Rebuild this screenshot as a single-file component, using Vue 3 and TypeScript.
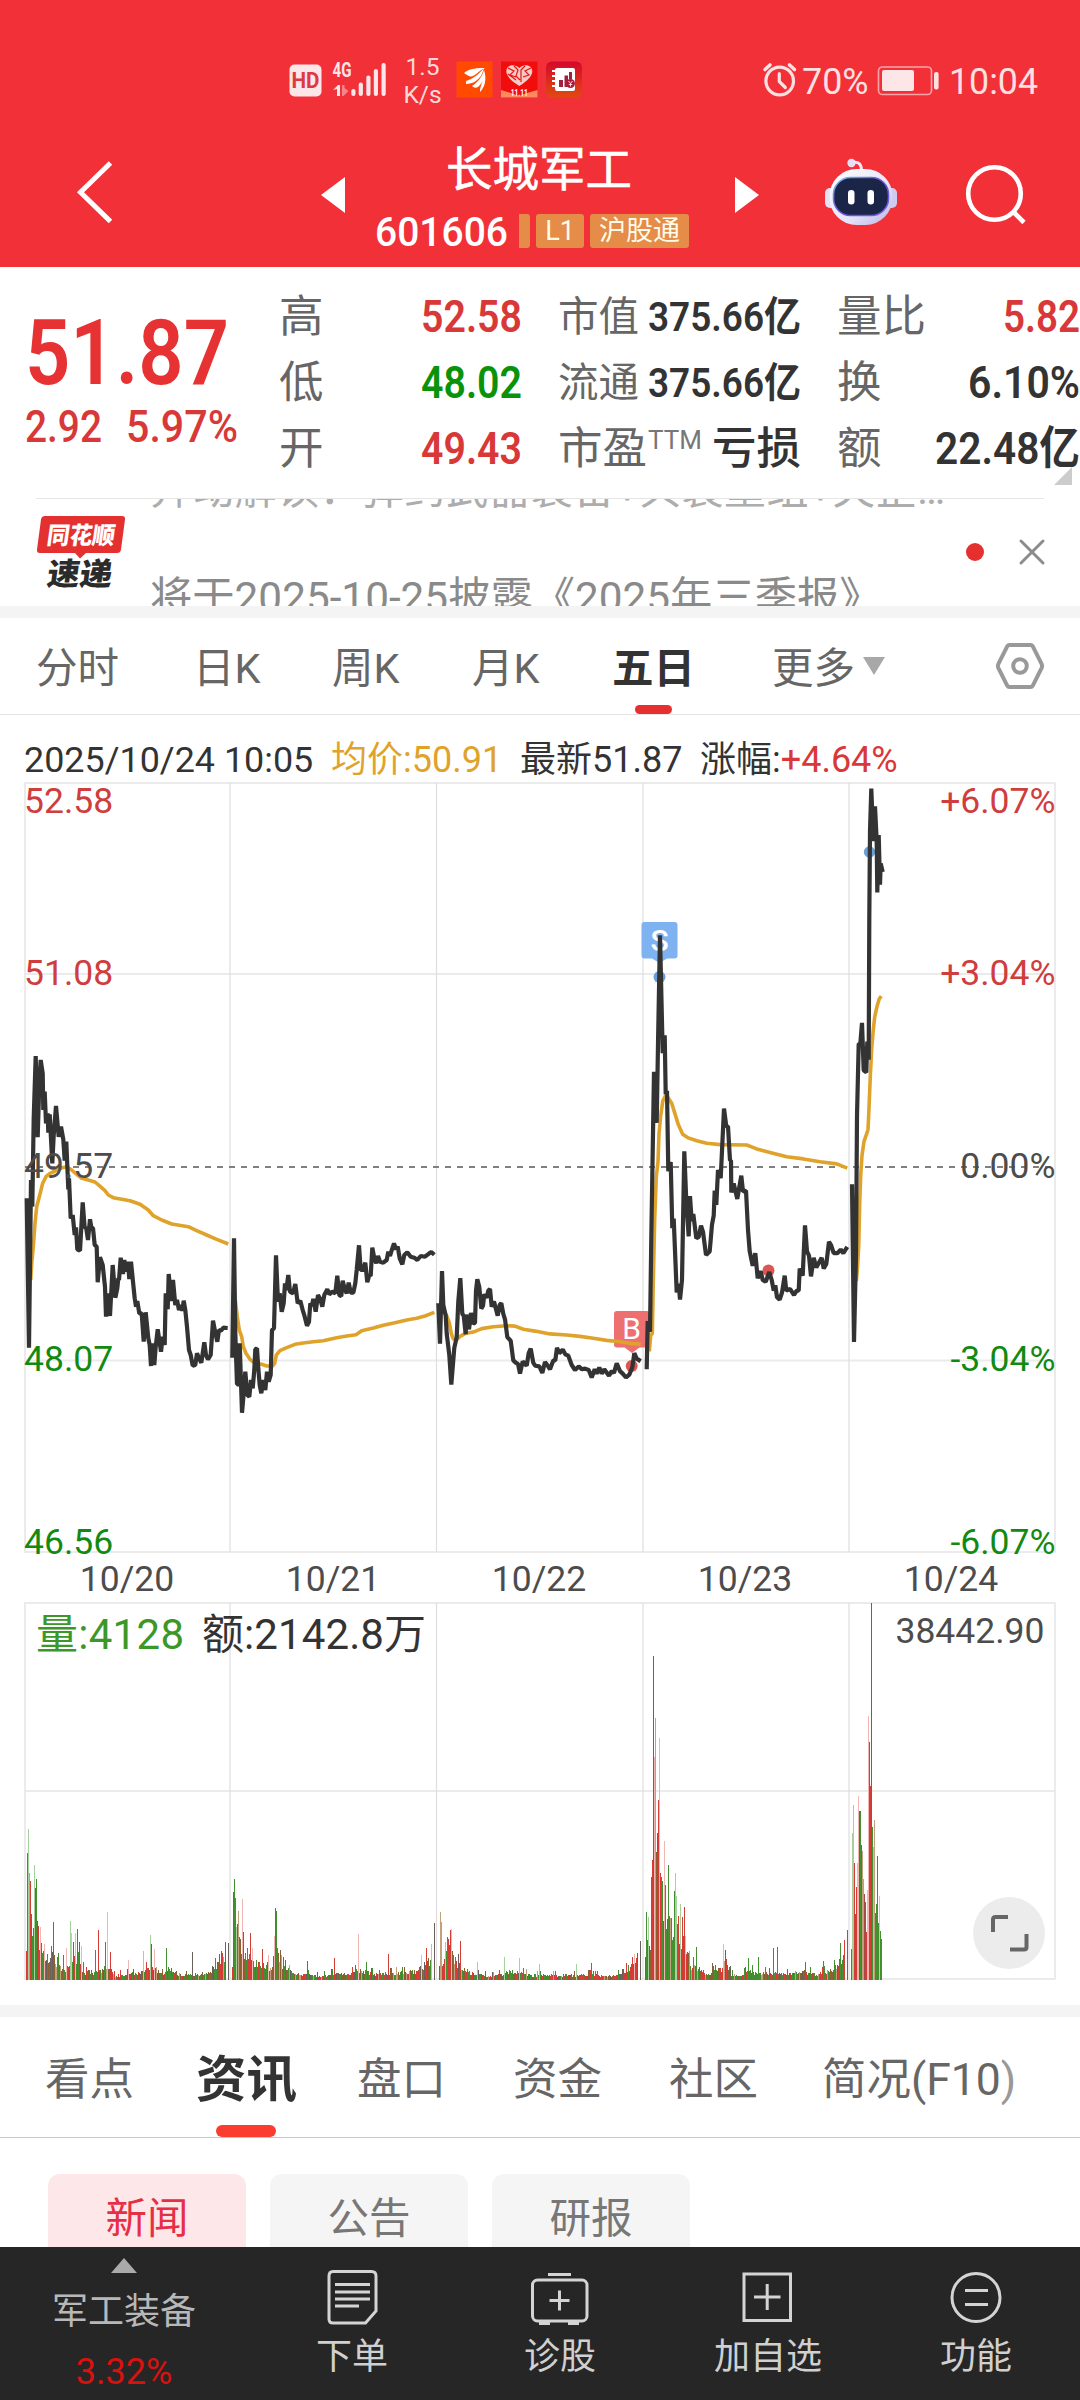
<script setup lang="ts">
import { h } from 'vue'

interface FitProps { t: string; w: number; s: number; wt?: number; box?: number }

// Condensed numerals: squeezes the text to a fixed advance width.
const Fit = (p: FitProps) => {
  const box = p.box ?? 66
  return h('svg', { width: p.w, height: box, style: 'display:block;flex:none;overflow:visible' }, [
    h('text', {
      x: 0,
      y: box / 2 + p.s * 0.355,
      'font-size': p.s,
      'font-weight': p.wt ?? 500,
      textLength: p.w,
      lengthAdjust: 'spacingAndGlyphs',
      fill: 'currentColor',
    }, p.t),
  ])
}

interface Session { ox: number; oy: number; sy: number; price: string; avg: string }

const sessions: Session[] = [
  {
    ox: 0, oy: 980, sy: 3,
    price: '80,655 87,1103 93,600 97,680 101,415 107,228 113,472 118,310 122,240 128,280 130,390 134,335 138,430 143,400 145,458 149,403 157,550 161,466 168,378 176,470 183,440 190,478 194,542 199,485 205,628 207,595 212,715 218,705 224,765 228,742 232,808 240,812 248,667 254,745 258,740 264,780 270,718 274,742 279,745 284,795 290,800 293,907 300,832 308,855 315,920 318,1010 323,940 330,1008 338,855 346,953 352,925 355,895 357,900 362,833 369,882 373,840 378,875 384,845 388,897 393,845 399,905 404,955 408,980 412,963 418,1000 425,1000 431,1085 437,997 445,1075 449,1095 453,1158 457,1090 463,1155 467,1100 473,1048 483,1115 488,1070 494,1095 497,940 503,988 506,882 514,963 519,900 526,975 531,960 537,990 543,975 547,992 551,962 556,990 561,1040 567,1110 572,1125 578,1157 586,1155 591,1120 597,1135 604,1148 613,1087 618,1125 624,1138 632,1125 639,1022 646,1058 652,1085 657,1050 663,1052 670,1043 683,1044',
    avg: '92,900 95,850 100,800 105,730 110,680 118,650 128,610 138,590 150,580 165,573 180,565 200,560 215,570 230,583 245,595 265,600 285,606 298,617 315,632 325,645 340,653 365,658 390,662 420,673 445,690 460,707 485,720 515,732 565,740 590,752 620,765 650,778 685,792',
  },
  {
    ox: 0, oy: 980, sy: 3,
    price: '697,1133 702,775 706,1060 711,1213 716,1213 719,1090 726,1298 731,1240 736,1175 742,1245 748,1250 753,1200 758,1225 763,1170 766,1108 771,1105 775,1165 779,1215 784,1240 790,1200 796,1230 801,1175 806,1205 812,1185 816,1050 822,1045 828,826 833,945 837,965 839,940 845,995 851,970 855,910 859,930 865,885 870,935 879,940 886,912 893,970 901,962 908,990 914,1010 921,1037 927,1025 931,970 936,978 940,957 947,995 954,945 961,958 967,980 973,945 982,928 988,943 997,935 1006,940 1012,887 1018,945 1024,948 1028,902 1034,928 1040,940 1046,908 1052,938 1060,938 1066,910 1070,870 1077,796 1082,870 1089,870 1096,848 1102,907 1108,885 1112,888 1117,803 1123,835 1129,850 1134,828 1140,845 1150,848 1160,840 1165,815 1170,828 1176,808 1182,790 1188,808 1193,800 1199,835 1207,853 1213,825 1222,817 1232,830 1243,833 1252,840 1262,828 1275,830 1288,820 1294,816 1303,824',
    avg: '706,960 712,1010 718,1050 725,1070 730,1100 738,1120 750,1138 765,1150 785,1153 800,1158 818,1158 824,1150 829,1125 840,1112 860,1103 885,1093 910,1089 940,1085 970,1082 1010,1073 1040,1068 1068,1064 1085,1052 1120,1044 1150,1036 1185,1028 1220,1020 1250,1015 1275,1008 1303,997',
  },
  {
    ox: 420, oy: 880, sy: 2.8,
    price: '55,1185 60,1298 66,1095 70,1190 77,1220 80,1270 88,1330 94,1413 103,1310 110,1280 115,1180 121,1115 127,1215 131,1220 137,1272 139,1217 147,1258 153,1212 160,1242 165,1240 168,1150 172,1118 178,1140 184,1200 189,1192 193,1160 200,1170 205,1150 210,1145 215,1195 222,1180 229,1205 233,1220 239,1190 244,1185 250,1215 255,1230 262,1280 272,1290 280,1345 288,1352 294,1355 300,1382 308,1348 320,1360 326,1325 332,1312 340,1352 346,1360 358,1362 367,1380 375,1350 382,1358 390,1370 400,1345 406,1345 411,1310 418,1325 428,1315 436,1328 445,1332 455,1358 465,1372 476,1362 486,1370 495,1368 506,1372 515,1393 524,1370 530,1382 538,1365 545,1382 553,1370 567,1388 575,1375 582,1380 590,1353 600,1375 608,1382 618,1393 628,1385 637,1365 643,1325 650,1340 662,1347',
    avg: '72,1205 80,1220 88,1240 94,1270 100,1285 110,1287 120,1278 135,1270 160,1266 185,1256 220,1251 260,1248 285,1249 310,1258 345,1263 390,1271 440,1274 480,1278 520,1283 560,1289 600,1293 640,1298 662,1300',
  },
  {
    ox: 420, oy: 880, sy: 2.8,
    price: '680,1370 683,1235 690,1265 694,1000 702,537 710,680 714,460 720,155 728,485 734,435 737,600 741,590 745,815 752,790 757,975 761,948 770,1155 776,1130 780,1175 786,1120 793,760 799,900 806,998 810,885 815,955 820,935 829,1003 836,1000 843,968 849,985 858,1050 869,1040 876,965 881,940 884,870 889,910 894,812 902,835 907,740 912,640 919,690 924,690 930,785 933,785 934,875 941,850 952,893 957,865 964,828 969,872 978,870 984,980 989,1040 998,1080 1006,1045 1013,1115 1022,1095 1028,1120 1037,1125 1048,1098 1055,1120 1061,1150 1066,1135 1071,1168 1079,1175 1086,1155 1094,1108 1099,1150 1110,1145 1122,1162 1130,1150 1136,1150 1139,1088 1148,1108 1155,967 1161,1040 1167,1052 1173,1110 1181,1058 1189,1085 1198,1070 1205,1058 1211,1088 1219,1075 1227,1013 1233,1022 1241,1045 1252,1045 1262,1035 1270,1045 1282,1027',
    avg: '688,1320 692,1275 697,1270 700,1120 704,950 709,830 714,790 717,710 722,660 728,620 736,605 745,610 755,625 765,655 775,685 788,712 805,722 830,730 860,737 900,741 980,742 1010,753 1050,763 1100,775 1150,781 1200,789 1250,795 1282,807',
  },
  {
    ox: 780, oy: 760, sy: 2.529,
    price: '216,1073 222,1472 228,1250 231,900 236,718 241,718 246,665 251,785 259,790 262,712 266,758 268,400 270,180 274,72 280,205 285,117 290,205 292,335 296,190 300,315 302,262 308,283',
    avg: '229,1318 232,1290 236,1230 239,1120 242,1050 246,1000 252,965 264,935 267,880 271,800 275,730 279,690 284,650 292,620 298,604 304,597',
  },
]

const place = (s: Session, raw: string): string =>
  raw.split(' ').map((p) => {
    const [x, y] = p.split(',').map(Number)
    return `${(s.ox + x / 3).toFixed(1)},${(s.oy + y / s.sy).toFixed(1)}`
  }).join(' ')

const lines = sessions.map((s) => ({ price: place(s, s.price), avg: place(s, s.avg) }))

const tints: Record<string, string> = {
  r: '#d63c36', g: '#429030', b: '#8a6030', t: '#c3a07c', p: '#f2b6b2', l: '#a5d19d', d: '#a84a44', k: '#6b5f5a',
}
const BASE = 1980
const XS = 2.904

interface Volume { env: [number, number][]; peaks: string }
const volumes: Volume[] = [
  {
    env: [[76, 45], [90, 48], [110, 50], [125, 25], [160, 16], [190, 12], [210, 24], [235, 16], [245, 8], [290, 9], [310, 17], [330, 5], [400, 7], [440, 14], [470, 6], [485, 13], [520, 6], [540, 5], [600, 8], [640, 18], [655, 32]],
    peaks: '80,938,g 82,867,l 85,998,t 88,1024,r 91,1122,b 97,1165,r 100,975,l 103,1045,r 106,1016,g 112,1158,r 117,1162,p 128,1212,p 150,1218,g 155,1147,r 170,1240,g 185,1245,g 192,1225,p 205,1142,l 208,1180,p 213,1205,b 219,1180,p 225,1167,r 230,1207,b 236,1217,p 277,1230,g 286,1170,r 306,1205,g 312,1117,p 320,1237,r 373,1260,p 418,1232,l 437,1185,l 440,1213,k 450,1228,p 483,1225,g 560,1237,k 655,1207,b 663,1210,k',
  },
  {
    env: [[676, 18], [681, 70], [695, 40], [715, 30], [740, 20], [790, 13], [800, 40], [815, 17], [840, 9], [880, 6], [930, 4], [970, 7], [1000, 6], [1040, 10], [1100, 6], [1130, 7], [1200, 9], [1235, 18], [1252, 25]],
    peaks: '678,1055,r 681,1018,g 684,1075,g 688,1162,l 692,1113,t 705,1077,p 708,1175,b 727,1180,r 734,1225,p 762,1228,r 780,1245,p 796,1187,p 800,1103,r 803,1112,g 806,1225,g 892,1262,r 971,1255,r 1041,1182,p 1065,1267,g 1129,1242,r 1223,1245,p 1238,1225,r 1254,1213,l 1261,1150,k',
  },
  {
    env: [[1277, 20], [1290, 22], [1300, 38], [1310, 32], [1320, 20], [1340, 14], [1360, 8], [1400, 5], [1430, 4], [1470, 8], [1500, 9], [1540, 5], [1660, 5], [1700, 6], [1760, 4], [1818, 7], [1851, 22]],
    peaks: '1280,1117,t 1282,1145,t 1295,1207,l 1300,1190,g 1308,1170,r 1312,1168,p 1337,1203,r 1388,1267,l 1465,1252,l 1508,1255,l 1568,1272,l 1674,1272,l 1718,1268,g 1819,1268,r 1843,1242,p 1851,1240,k 1859,1203,k',
  },
  {
    env: [[1874, 15], [1880, 50], [1890, 40], [1894, 110], [1902, 180], [1908, 90], [1915, 180], [1920, 98], [1930, 60], [1943, 60], [1953, 46], [1968, 52], [1986, 38], [1998, 20], [2018, 13], [2038, 10], [2058, 5], [2073, 14], [2088, 10], [2106, 22], [2123, 6], [2148, 4], [2168, 14], [2188, 8], [2218, 8], [2268, 6], [2338, 9], [2368, 6], [2418, 11], [2438, 20], [2452, 30]],
    peaks: '1877,1115,g 1884,1130,l 1891,1010,r 1894,960,r 1897,348,d 1900,650,p 1903,533,t 1908,880,d 1913,780,r 1916,595,p 1920,1012,g 1923,1022,g 1929,902,p 1934,1035,g 1941,975,g 1948,1135,t 1958,1052,g 1961,998,l 1964,1068,l 1970,1127,r 1975,1092,l 1981,1130,r 1987,1102,r 1990,1187,p 2000,1240,b 2022,1222,g 2100,1213,p 2106,1230,k 2173,1255,g 2202,1250,g 2246,1225,g 2257,1222,g 2340,1265,r 2391,1262,g 2440,1208,g 2452,1200,r 2460,1170,r',
  },
  {
    env: [[2474, 45], [2478, 120], [2486, 80], [2493, 120], [2502, 125], [2508, 80], [2518, 45], [2521, 140], [2530, 170], [2536, 120], [2544, 70], [2553, 60], [2559, 40]],
    peaks: '2475,880,l 2478,795,l 2481,970,r 2484,1122,r 2487,1040,r 2490,970,p 2493,768,p 2496,812,k 2499,812,g 2502,915,b 2504,932,t 2507,1017,t 2511,1062,d 2516,1175,r 2519,1050,p 2522,528,p 2524,605,r 2527,738,r 2530,188,d 2533,862,g 2536,920,l 2539,840,t 2542,1120,g 2545,1092,g 2548,948,g 2551,1150,g 2554,1068,p 2557,1172,g 2560,1198,g',
  },
]

let seed = 20251
const rand = (): number => {
  seed = (seed * 1103515245 + 12345) % 2147483648
  return seed / 2147483648
}

const volumePaths = (() => {
  const d: Record<string, string> = {}
  const add = (x: number, hgt: number, c: string) => {
    d[c] = (d[c] ?? '') + `M${x} ${BASE}v${-hgt.toFixed(1)}h1V${BASE}z`
  }
  for (const v of volumes) {
    const taken = new Map<number, [number, string]>()
    for (const p of v.peaks.split(' ')) {
      const [x, y, c] = p.split(',')
      taken.set(Math.floor(Number(x) / XS), [(1320 - Number(y)) / 3, c])
    }
    const first = Math.floor(v.env[0][0] / XS)
    const last = Math.floor(v.env[v.env.length - 1][0] / XS)
    for (let x = first; x <= last; x++) {
      if (taken.has(x)) continue
      const k = v.env.findIndex((e) => e[0] / XS > x)
      const b = v.env[k < 1 ? 1 : k]
      const a = v.env[k < 1 ? 0 : k - 1]
      const f = Math.min(1, Math.max(0, (x * XS - a[0]) / (b[0] - a[0])))
      const e = a[1] + (b[1] - a[1]) * f
      const r = rand()
      let hgt = e * (0.6 + 0.6 * rand())
      if (e < 20 && r > 0.86) hgt = e * 1.4 + 2
      add(x, Math.max(3, hgt), 'rgbrgbrtgkbg'[Math.floor(rand() * 12)] ?? 'r')
    }
    taken.forEach(([hgt, c], x) => add(x, hgt, c))
  }
  return Object.entries(d).map(([c, path]) => ({ fill: tints[c], path }))
})()

const gridX = [230, 436.5, 643, 849]
const prices = [
  { y: 813, l: '52.58', r: '+6.07%', c: '#cf3d3d' },
  { y: 985, l: '51.08', r: '+3.04%', c: '#cf3d3d' },
  { y: 1178, l: '49.57', r: '0.00%', c: '#4c4c4c' },
  { y: 1371, l: '48.07', r: '-3.04%', c: '#128a12' },
  { y: 1554, l: '46.56', r: '-6.07%', c: '#128a12' },
]
const dates = ['10/20', '10/21', '10/22', '10/23', '10/24']
const chips = ['新闻', '公告', '研报']
</script>

<template>
  <div class="screen">
    <header class="head">
      <div class="status">
        <svg class="st-left" width="160" height="60" viewBox="285 50 160 60">
          <rect x="289.5" y="64.5" width="32" height="32" rx="5" fill="#fde6e7" />
          <text x="305.5" y="88" text-anchor="middle" font-size="22" font-weight="700" textLength="28" lengthAdjust="spacingAndGlyphs" fill="#dd3a40">HD</text>
          <text x="332.5" y="77" font-size="20" font-weight="700" textLength="19" lengthAdjust="spacingAndGlyphs" fill="#fde6e7">4G</text>
          <path d="M333 90l5-5h2v11h-3v-7z" fill="#fde6e7" />
          <path d="M342 85h2.500v3l4 3-5 5h-1.500z" fill="#f4868a" />
          <g fill="#fde6e7">
            <rect x="351.300" y="89" width="4.200" height="7" rx="2" />
            <rect x="358.700" y="82.500" width="4.200" height="13.500" rx="2" />
            <rect x="366.300" y="75.500" width="4.200" height="20.500" rx="2" />
            <rect x="373.800" y="69" width="4.200" height="27" rx="2" />
            <rect x="381.500" y="63" width="4.200" height="33" rx="2" />
          </g>
          <text x="422.500" y="75" font-size="24.500" text-anchor="middle" fill="#fdd9da">1.5</text>
          <text x="422.500" y="103" font-size="24.500" text-anchor="middle" fill="#fdd9da">K/s</text>
        </svg>
        <svg class="apps" width="128" height="37" viewBox="456 61 128 37">
          <rect x="456.500" y="61.500" width="36" height="36" fill="#ff4a00" />
          <path d="M464 73c6-5 14-5 21-5-5 2-8 6-12 8-3 1.500-6-1-9-3z" fill="#fff" />
          <path d="M466 81c7-2 13-7 18-13l-2 6c-3 6-9 10-16 10z" fill="#fff" />
          <path d="M472 86c6-4 10-9 12-16 1 6 0 12-6 17-2 1-4 1-6-1zM480 91c0-6 5-11 4-21 3 9 1 17-4 22z" fill="#fff" />
          <rect x="501" y="61.500" width="36.500" height="36" fill="#f20d0d" />
          <path d="M501 90l10 3 8 3 8-3 10.500-3v7.500H501z" fill="#ff8a5c" />
          <path d="M519.300 86c-8-5-13-10-13-15 0-6 8-8 13-3 5-5 13-3 13 3 0 5-5 10-13 15z" fill="#f7c9c4" />
          <path d="M508 68l6 3-4 4 6 2M514 66l4 4-2 6 4 4M531 68l-6 3 4 4-6 2M525 66l-4 4v12M508 74l8 6" fill="none" stroke="#e01818" stroke-width="1.200" />
          <text x="519.300" y="95.500" text-anchor="middle" font-size="8.500" font-weight="700" textLength="17" lengthAdjust="spacingAndGlyphs" fill="#fff">11.11</text>
          <defs><linearGradient id="bk" x1="0" y1="0" x2="0" y2="1"><stop offset="0" stop-color="#d4082c" /><stop offset="1" stop-color="#e04a10" /></linearGradient></defs>
          <rect x="546" y="61.500" width="36" height="36" rx="6" fill="url(#bk)" />
          <rect x="555" y="68" width="20" height="23" rx="2" fill="#fff" />
          <path d="M552 71h6M552 76h6M552 81h6M552 86h6" stroke="#fff" stroke-width="1.800" />
          <path d="M559 80h4v7h-4zM564.500 75.500h3.500V87h-3.500zM569 72h3v7h-3z" fill="#a02040" />
          <circle cx="570.500" cy="83.500" r="4.500" fill="#b01838" />
          <path d="M568.500 81l2 2.500 2-2.500M570.500 83.500v3M568.800 84.500h3.400" stroke="#fff" stroke-width=".8" fill="none" />
        </svg>
        <svg class="st-right" width="285" height="40" viewBox="760 60 285 40" fill="none" stroke="#fde0e1">
          <circle cx="779.700" cy="81" r="13.800" stroke-width="3.200" />
          <path d="M779.300 73.500v8l6 6" stroke-width="3.200" stroke-linecap="round" />
          <path d="M765 69.500l5-4.500M794.500 69.500l-5-4.500" stroke-width="3.600" stroke-linecap="round" />
          <text x="802" y="94" font-size="36" textLength="66.500" lengthAdjust="spacingAndGlyphs" fill="#fde0e1" stroke="none">70%</text>
          <rect x="878.500" y="67" width="53" height="27.500" rx="4" stroke-width="1.600" stroke="#f9a5a8" />
          <rect x="882" y="70" width="32" height="21" rx="2" fill="#fde6e7" stroke="none" />
          <rect x="934" y="72" width="4.600" height="17.500" rx="2" fill="#fde0e1" stroke="none" />
          <text x="949" y="94" font-size="36" textLength="89" lengthAdjust="spacingAndGlyphs" fill="#fde0e1" stroke="none">10:04</text>
        </svg>
      </div>
      <div class="title-row">
        <svg class="back" width="40" height="66" viewBox="75 159 40 66"><path d="M110.500 163L80.500 192.300l30 29.200" fill="none" stroke="#fff" stroke-width="5" /></svg>
        <svg class="prev" width="24" height="36" viewBox="0 0 24 36"><path d="M24 0v36L0 18z" fill="#fff" /></svg>
        <div class="name-box">
          <div class="name">长城军工</div>
          <div class="code-row">
            <Fit t="601606" :w="133" :s="41.500" :wt="500" :box="34" />
            <span class="tag stub" />
            <span class="tag l1">L1</span>
            <span class="tag hgt">沪股通</span>
          </div>
        </div>
        <svg class="next" width="24" height="36" viewBox="0 0 24 36"><path d="M0 0v36l24-18z" fill="#fff" /></svg>
        <svg class="robot" width="74" height="68" viewBox="824 158 74 68">
          <defs>
            <linearGradient id="rb" x1="0" y1="0" x2="1" y2="1"><stop offset="0" stop-color="#fff" /><stop offset=".6" stop-color="#e6e4f8" /><stop offset="1" stop-color="#b9b4e6" /></linearGradient>
            <linearGradient id="rs" x1="0" y1="0" x2="1" y2="1"><stop offset="0" stop-color="#7ac3ee" /><stop offset=".5" stop-color="#6a4ad0" /><stop offset="1" stop-color="#6d63f0" /></linearGradient>
          </defs>
          <circle cx="851.500" cy="163" r="4.200" fill="#e6def4" />
          <path d="M853 162.500c6-1 8.500 2 8.500 8" fill="none" stroke="#f0e2ee" stroke-width="3" />
          <rect x="825" y="188" width="12" height="20" rx="5" fill="#e4e2f6" />
          <rect x="885" y="188" width="12" height="20" rx="5" fill="#cfcbee" />
          <rect x="829.500" y="169" width="63" height="56" rx="27" fill="url(#rb)" />
          <rect x="833.500" y="177.500" width="55" height="38" rx="17" fill="#1a2548" stroke="url(#rs)" stroke-width="1.600" />
          <rect x="848" y="190" width="6.500" height="14.500" rx="3.200" fill="#fff" />
          <rect x="867.500" y="190" width="6.500" height="14.500" rx="3.200" fill="#fff" />
        </svg>
        <svg class="search" width="64" height="62" viewBox="964 163 64 62" fill="none" stroke="#fff"><circle cx="994.500" cy="193.500" r="26.300" stroke-width="4.600" /><path d="M1013 211.500l11 11" stroke-width="4.600" /></svg>
      </div>
    </header>

    <section class="quote">
      <div class="main-q">
        <Fit class="red1" t="51.87" :w="204" :s="91" :wt="600" :box="80" />
        <div class="chg red2">
          <Fit t="2.92" :w="77" :s="45" :wt="500" :box="50" />
          <Fit t="5.97%" :w="112" :s="45" :wt="500" :box="50" />
        </div>
      </div>
      <div class="qcol c2">
        <div class="qrow"><span>高</span><Fit class="red2" t="52.58" :w="101" :s="45" :wt="600" /></div>
        <div class="qrow"><span>低</span><Fit class="green" t="48.02" :w="101" :s="45" :wt="600" /></div>
        <div class="qrow"><span>开</span><Fit class="red2" t="49.43" :w="101" :s="45" :wt="600" /></div>
      </div>
      <div class="qcol c3">
        <div class="qrow"><span class="sm">市值</span><Fit class="dark" t="375.66亿" :w="153" :s="41" :wt="600" /></div>
        <div class="qrow"><span class="sm">流通</span><Fit class="dark" t="375.66亿" :w="153" :s="41" :wt="600" /></div>
        <div class="qrow"><span>市盈<i class="ttm">TTM</i></span><b class="dark loss">亏损</b></div>
      </div>
      <div class="qcol c4">
        <div class="qrow"><span>量比</span><Fit class="red2" t="5.82" :w="77" :s="45" :wt="600" /></div>
        <div class="qrow"><span>换</span><Fit class="dark" t="6.10%" :w="112" :s="45" :wt="600" /></div>
        <div class="qrow"><span>额</span><Fit class="dark" t="22.48亿" :w="145" :s="45" :wt="600" /></div>
      </div>
      <svg class="corner" width="18" height="18" viewBox="0 0 18 18"><path d="M18 0v18H0z" fill="#ccc" /></svg>
    </section>

    <section class="news">
      <svg class="logo" width="92" height="78" viewBox="35 513 92 78">
        <path d="M45 516h77q3.500 0 3 3.500l-4 30q-.5 3.500-4 3.500H86l-6 5.500-5-5.500H40q-3.500 0-3-3.500l4-30q.5-3.500 4-3.500z" fill="#e4312f" />
        <text transform="translate(46 544) skewX(-8)" font-size="24" font-weight="900" textLength="68" lengthAdjust="spacingAndGlyphs" fill="#fff">同花顺</text>
        <text transform="translate(46 585) skewX(-8)" font-size="31" font-weight="900" textLength="65" lengthAdjust="spacingAndGlyphs" fill="#2b2b2b">速递</text>
      </svg>
      <div class="ticker">
        <div class="line old">异动解读：弹药武器装备+兵装重组+央企…</div>
        <div class="line">将于2025-10-25披露《2025年三季报》</div>
      </div>
      <span class="dot" />
      <svg class="close" width="26" height="26" viewBox="0 0 26 26"><path d="M2 2l22 22M24 2L2 24" stroke="#8c8c8c" stroke-width="3" stroke-linecap="round" /></svg>
    </section>
    <div class="band" />

    <nav class="ptabs">
      <span class="pt t1">分时</span><span class="pt t2">日K</span><span class="pt t3">周K</span><span class="pt t4">月K</span>
      <span class="pt t5">五日</span><span class="pt t6">更多</span>
      <svg class="more" width="22" height="18" viewBox="0 0 22 18"><path d="M0 0h22L11 18z" fill="#a8a8a8" /></svg>
      <svg class="hex" width="50" height="48" viewBox="995 642 50 48" fill="none" stroke="#999" stroke-width="4"><path d="M1009.500 645h21q1.500 0 2.200 1.200l9 18q.8 1.800 0 3.600l-9 18q-.7 1.200-2.200 1.200h-21q-1.500 0-2.200-1.200l-9-18q-.8-1.800 0-3.600l9-18q.7-1.200 2.200-1.200z" /><circle cx="1020" cy="666" r="6.800" /></svg>
    </nav>

    <div class="info">
      <span class="i1">2025/10/24 10:05</span><span class="i2">均价:50.91</span><span class="i3">最新51.87</span><span class="i4">涨幅:<em>+4.64%</em></span>
    </div>

    <svg class="chart" width="1080" height="1223" viewBox="0 782 1080 1223">
      <g stroke="#ebebeb" stroke-width="2" fill="none">
        <path d="M24 783H1055.500M24 974H1055.500M24 1360.500H1055.500M24 1552H1055.500M24 1603H1055.500M24 1791H1055.500M24 1979H1055.500" />
        <path d="M25 783V1552M1055 783V1552M25 1603V1979M1055 1603V1979" />
      </g>
      <path v-for="x in gridX" :key="x" :d="`M${x} 783V1552M${x} 1603V1979`" stroke="#dedede" stroke-width="1.200" />
      <path d="M25 1167H1055" stroke="#808080" stroke-width="1.800" stroke-dasharray="6 6" />

      <g>
        <path d="M644.500 922h30q3 0 3 3v30.500q0 3-3 3H667l-7.500 4.500-7.500-4.500h-7.500q-3 0-3-3V925q0-3 3-3z" fill="#7fb2f0" />
        <text x="659.500" y="950.500" font-size="30" font-weight="500" text-anchor="middle" fill="#fff">S</text>
        <circle cx="659.500" cy="977" r="6" fill="#6a9fdb" />
        <path d="M617 1311h30q3 0 3 3v30.500q0 3-3 3h-7.500l-7.500 5.500-7.500-5.500H617q-3 0-3-3V1314q0-3 3-3z" fill="#ee6f70" />
        <text x="631.700" y="1339" font-size="30" font-weight="400" text-anchor="middle" fill="#fff">B</text>
        <circle cx="631.700" cy="1366" r="6" fill="#dc5656" />
        <circle cx="768.500" cy="1270.500" r="6" fill="#dc5656" />
        <circle cx="869.500" cy="852" r="5.700" fill="#6a9fdb" />
      </g>

      <polyline v-for="(l, i) in lines" :key="'a' + i" :points="l.avg" fill="none" stroke="#dfa32b" stroke-width="3.600" stroke-linejoin="round" />
      <polyline v-for="(l, i) in lines" :key="'p' + i" :points="l.price" fill="none" stroke="#333" stroke-width="4.200" stroke-linejoin="bevel" />

      <g font-size="35.500">
        <template v-for="p in prices" :key="p.l">
          <text x="24" :y="p.y" :fill="p.c">{{ p.l }}</text>
          <text x="1055.500" :y="p.y" text-anchor="end" :fill="p.c">{{ p.r }}</text>
        </template>
        <text v-for="(d, i) in dates" :key="d" :x="127 + i * 206" y="1591" text-anchor="middle" fill="#4c4c4c">{{ d }}</text>
        <text x="1044.500" y="1643" text-anchor="end" fill="#4c4c4c">38442.90</text>
      </g>
      <text x="36" y="1648.500" font-size="42" textLength="148" fill="#3c9729">量:4128</text>
      <text x="202" y="1648.500" font-size="42" textLength="224" fill="#333">额:2142.8万</text>

      <g shape-rendering="crispEdges"><path v-for="v in volumePaths" :key="v.fill" :d="v.path" :fill="v.fill" /></g>

      <circle cx="1009" cy="1933" r="36" fill="#ececec" />
      <path d="M993 1932v-12.500q0-2.500 2.500-2.500H1008M1010 1949.500h14q2.500 0 2.500-2.500v-13" fill="none" stroke="#666" stroke-width="4" />
    </svg>
    <div class="band" />

    <nav class="btabs">
      <span class="bt b1">看点</span><span class="bt b2">资讯</span><span class="bt b3">盘口</span><span class="bt b4">资金</span><span class="bt b5">社区</span><span class="bt b6">简况(F10<i>)</i></span>
    </nav>

    <div class="chips"><span v-for="(c, i) in chips" :key="c" class="chip" :class="{ on: i === 0 }">{{ c }}</span></div>

    <footer class="foot">
      <div class="fcell first">
        <svg width="26" height="15" viewBox="0 0 26 15"><path d="M13 0l13 15H0z" fill="#aaa" /></svg>
        <span class="fname">军工装备</span>
        <span class="fpct">3.32%</span>
      </div>
      <div class="fcell">
        <svg width="60" height="60" viewBox="322 2267 60 60" fill="none" stroke="#d4d4d4" stroke-width="3"><path d="M333 2271.500h38.500q4.500 0 4.500 4.500v35l-10.500 12H333q-4 0-4-4V2276q0-4.500 4-4.500z" /><path d="M335 2284.500h35M335 2292h35M335 2299h35M335 2306h24" /></svg>
        <span>下单</span>
      </div>
      <div class="fcell">
        <svg width="60" height="60" viewBox="530 2267 60 60" fill="none" stroke="#d4d4d4" stroke-width="3"><rect x="532.500" y="2280" width="54.500" height="41" rx="5" /><path d="M548 2274.500h23M559.500 2290.500v20M549.500 2300.500h20" /><path d="M539 2323.500h11M568 2323.500h11" /></svg>
        <span>诊股</span>
      </div>
      <div class="fcell">
        <svg width="60" height="60" viewBox="738 2267 60 60" fill="none" stroke="#d4d4d4" stroke-width="3"><rect x="744" y="2274" width="46.500" height="46.500" /><path d="M767.200 2284v26M754 2297h26.500" /></svg>
        <span>加自选</span>
      </div>
      <div class="fcell">
        <svg width="60" height="60" viewBox="945 2267 60 60" fill="none" stroke="#d4d4d4" stroke-width="3"><circle cx="975" cy="2297.500" r="24" /><path d="M964 2290.500h23M964 2304.500h23" /></svg>
        <span>功能</span>
      </div>
    </footer>
  </div>
</template>

<style>
body { margin: 0; background: #fff; }
</style>

<style scoped>
.screen {
  width: 1080px; height: 2400px; overflow: hidden; background: #fff;
  font-family: Roboto, "Noto Sans CJK SC", sans-serif;
  display: flex; flex-direction: column;
}
.screen > * { flex: none; }
svg { display: block; flex: none; overflow: visible; }
.head { height: 267px; background: #f23038; color: #fff; }
.status { height: 120px; display: flex; padding: 0 35px 0 285px; box-sizing: border-box; }
.st-left { margin-top: 50px; }
.apps { margin: 61px 0 0 11px; }
.st-right { margin: 60px 0 0 auto; }
.title-row { height: 147px; display: flex; }
.back { margin: 39px 0 0 75px; }
.prev { margin: 57px 0 0 206px; }
.name-box { width: 328px; margin: 23px 0 0 30px; }
.name { height: 54px; line-height: 54px; font-size: 46.500px; -webkit-text-stroke: 0.6px #fff; margin-left: 71px; white-space: nowrap; }
.code-row { display: flex; align-items: center; height: 34px; margin-top: 17px; }
.tag { height: 34px; line-height: 34px; background: #e58c49; border-radius: 3px; font-size: 27px; color: #fffbe8; text-align: center; }
.stub { width: 11px; border-radius: 0 3px 3px 0; margin-left: 11px; }
.l1 { width: 48px; margin-left: 6px; }
.hgt { width: 99px; margin-left: 6px; }
.next { margin: 57px 0 0 32px; }
.robot { margin: 38px 0 0 65px; }
.search { margin: 43px 0 0 66px; }

.quote { position: relative; height: 231px; display: flex; padding-left: 25px; box-sizing: border-box; }
.main-q { width: 254px; padding-top: 45px; }
.chg { display: flex; gap: 24px; margin-top: 9px; }
.red1 { color: #e63232; }
.red2 { color: #d93838; }
.green { color: #0a930a; }
.dark { color: #333; }
.qcol { padding-top: 16px; color: #666; font-size: 44.500px; }
.qrow { height: 66px; line-height: 69px; display: flex; justify-content: space-between; white-space: nowrap; }
.c2 { width: 243px; }
.c3 { width: 243px; margin-left: 36px; }
.c4 { width: 243px; margin-left: 36px; }
.sm { font-size: 40.500px; }
.ttm { font-style: normal; font-size: 26px; font-weight: 400; vertical-align: 15px; line-height: 1; margin-left: 1px; color: #777; }
.loss { font-weight: 500; }
.corner { position: absolute; left: 1054px; top: 200px; }

.news { position: relative; height: 108px; display: flex; align-items: flex-start; }
.news::before { content: ""; position: absolute; left: 36px; right: 36px; top: 0; height: 1px; background: #e6e6e6; }
.logo { margin: 15px 0 0 35px; }
.ticker { width: 800px; height: 108px; margin-left: 23px; overflow: hidden; font-size: 42.300px; color: #8a8a8a; }
.line { height: 96px; line-height: 96px; white-space: nowrap; }
.line.old { color: #adadad; margin-top: -56px; margin-bottom: 12px; }
.dot { width: 18px; height: 18px; border-radius: 50%; background: #e6302f; margin: 45px 0 0 16px; }
.close { margin: 41px 0 0 35px; }
.band { height: 12px; background: #f4f4f4; }

.ptabs { position: relative; height: 97px; box-sizing: border-box; border-bottom: 1px solid #e4e4e4; display: flex; }
.pt { font-size: 41.500px; line-height: 101px; color: #666; white-space: nowrap; }
.t1 { width: 157px; margin-left: 36px; }
.t2 { width: 139px; }
.t3 { width: 140px; }
.t4 { width: 140px; }
.t5 { position: relative; width: 160px; font-weight: 700; color: #333; font-size: 41.500px; }
.t5::after { content: ""; position: absolute; left: 23px; bottom: 0; width: 37px; height: 9px; border-radius: 4.500px; background: #e6302f; }
.t6 { width: 82px; }
.more { margin: 39px 0 0 9px; }
.hex { margin: 24px 0 0 110px; }

.info { height: 67px; display: flex; font-size: 36px; line-height: 90px; color: #333; white-space: nowrap; }
.i1 { margin-left: 24px; width: 307px; font-size: 35.900px; }
.i2 { width: 189px; color: #dfa32b; }
.i3 { width: 180px; }
.i4 em { font-style: normal; color: #d93838; }
.chart { display: block; }

.btabs { height: 121px; box-sizing: border-box; border-bottom: 1px solid #c8c8c8; display: flex; font-size: 44.500px; line-height: 126px; color: #666; white-space: nowrap; }
.b1 { margin-left: 45px; width: 151px; }
.b2 { position: relative; width: 161px; font-size: 50.500px; font-weight: 700; color: #333; }
.b2::after { content: ""; position: absolute; left: 20px; bottom: 0; width: 60px; height: 12px; border-radius: 6px; background: #fb3c30; }
.b3 { width: 156px; }
.b4 { width: 156px; }
.b5 { width: 153px; }
.b6 i { font-style: normal; color: #999; }
.chips { height: 109px; padding: 36px 0 0 48px; box-sizing: border-box; overflow: hidden; display: flex; gap: 24px; }
.chip { width: 198px; height: 88px; line-height: 90px; border-radius: 12px; background: #f5f5f5; color: #777; font-size: 41.500px; text-align: center; }
.chip.on { background: #fee7e9; color: #e62e45; }

.foot { height: 153px; background: #262626; display: flex; color: #d0d0d0; font-size: 36px; }
.fcell { width: 208px; display: flex; flex-direction: column; align-items: center; padding-top: 20px; box-sizing: border-box; }
.fcell span { line-height: 40px; margin-top: 10px; }
.fcell.first { width: 248px; padding-top: 11px; }
.fcell .fname { margin-top: 19px; color: #b8b8b8; }
.fcell .fpct { margin-top: 20px; color: #d8120e; }
</style>
